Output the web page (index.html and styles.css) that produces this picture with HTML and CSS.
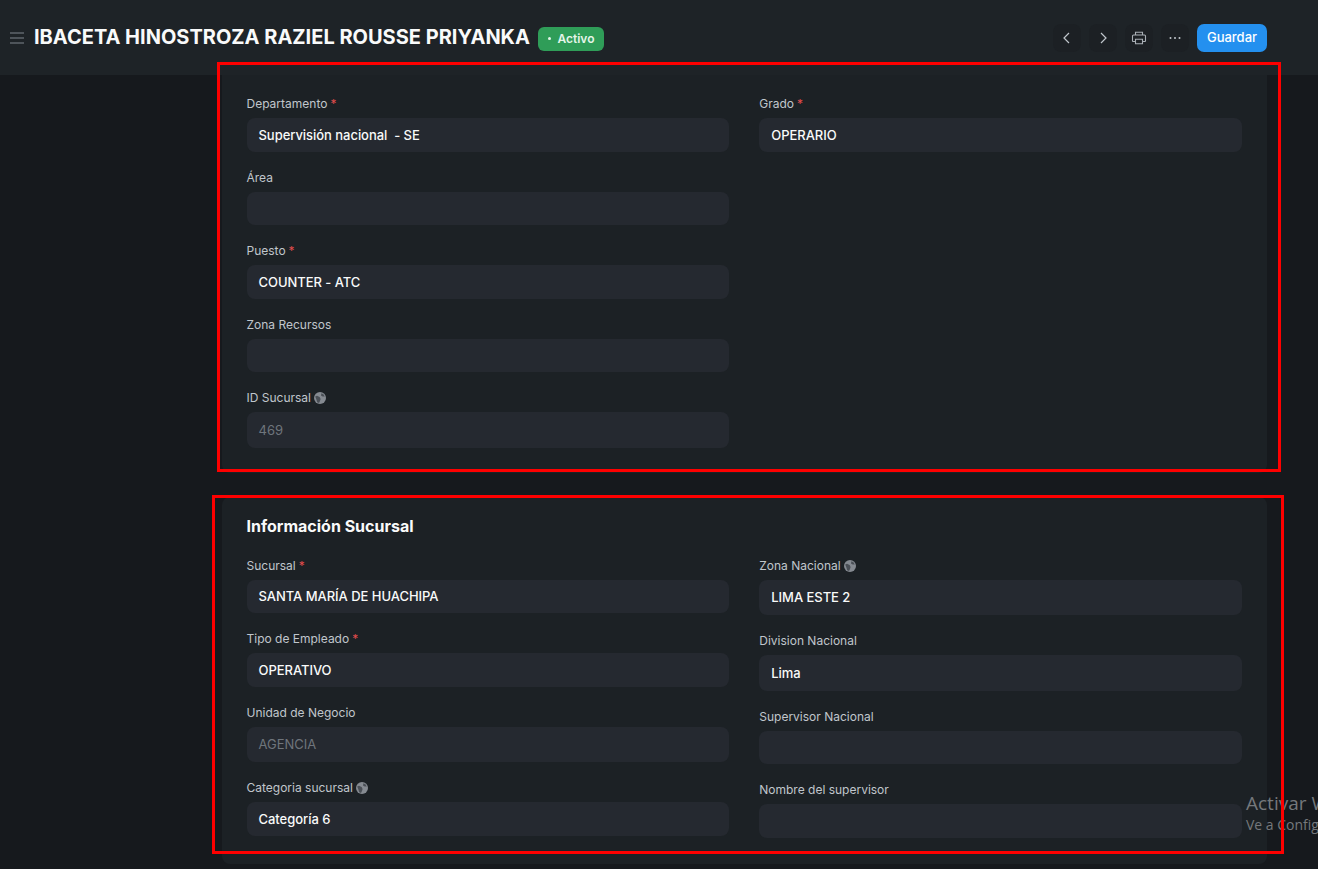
FILE: index.html
```html
<!DOCTYPE html>
<html lang="es">
<head>
<meta charset="utf-8">
<title>IBACETA HINOSTROZA RAZIEL ROUSSE PRIYANKA</title>
<link rel="stylesheet" href="styles.css">
</head>
<body>
<svg class="defs" width="0" height="0" aria-hidden="true">
  <symbol id="globe" viewBox="0 0 12 12">
    <circle cx="6" cy="6" r="6" fill="#858a91"/>
    <path d="M7.400 1.200 9.400 2.200 10.800 4.400 8.600 4.600 7 3.400ZM1.200 4.600 3 3.800 5.600 5 6.600 7 6 9 5 11 3.200 10.200 2.400 7.400Z" fill="#4a4f56"/>
  </symbol>
</svg>

<header class="topbar">
  <div class="title-group">
    <svg class="menu-icon" viewBox="0 0 16 14" width="16" height="14" aria-hidden="true"><path d="M1 2h14M1 7h14M1 12h14" stroke="#5f656c" stroke-width="1.5" fill="none"/></svg>
    <h1 class="title">IBACETA HINOSTROZA RAZIEL ROUSSE PRIYANKA</h1>
    <span class="badge"><span class="dot"></span>Activo</span>
  </div>
  <div class="actions">
    <button class="icon-btn" aria-label="Anterior"><svg viewBox="0 0 16 16" width="16" height="16"><path d="M10 3 5 8l5 5" stroke="#c0c6cc" stroke-width="1.2" fill="none"/></svg></button>
    <button class="icon-btn" aria-label="Siguiente"><svg viewBox="0 0 16 16" width="16" height="16"><path d="m6 3 5 5-5 5" stroke="#c0c6cc" stroke-width="1.2" fill="none"/></svg></button>
    <button class="icon-btn" aria-label="Imprimir"><svg viewBox="0 0 16 16" width="16" height="16"><path d="M4.500 5V2.200h7V5M4.500 11.500H2.200a.7.7 0 0 1-.7-.7V6a1 1 0 0 1 1-1h11a1 1 0 0 1 1 1v4.800a.7.7 0 0 1-.7.7h-2.300M4.500 9.300h7v4.500h-7z" stroke="#a9afb5" stroke-width="1.100" fill="none"/></svg></button>
    <button class="icon-btn" aria-label="Más"><svg viewBox="0 0 16 16" width="16" height="16"><g fill="#c0c6cc"><circle cx="3.500" cy="8" r="1"/><circle cx="8" cy="8" r="1"/><circle cx="12.500" cy="8" r="1"/></g></svg></button>
    <button class="save-btn">Guardar</button>
  </div>
</header>

<main class="content">
  <section class="card card-first">
    <div class="col">
      <div class="field"><label class="label">Departamento <span class="req">*</span></label><div class="input value">Supervisión nacional&nbsp; - SE</div></div>
      <div class="field"><label class="label">Área</label><div class="input"></div></div>
      <div class="field"><label class="label">Puesto <span class="req">*</span></label><div class="input value">COUNTER - ATC</div></div>
      <div class="field"><label class="label">Zona Recursos</label><div class="input"></div></div>
      <div class="field"><label class="label">ID Sucursal <svg class="globe"><use href="#globe"/></svg></label><div class="input readonly">469</div></div>
    </div>
    <div class="col">
      <div class="field"><label class="label">Grado <span class="req">*</span></label><div class="input value">OPERARIO</div></div>
    </div>
  </section>

  <section class="card card-second">
    <h2 class="section-title">Información Sucursal</h2>
    <div class="columns">
      <div class="col">
        <div class="field"><label class="label">Sucursal <span class="req">*</span></label><div class="input value">SANTA MARÍA DE HUACHIPA</div></div>
        <div class="field"><label class="label">Tipo de Empleado <span class="req">*</span></label><div class="input value">OPERATIVO</div></div>
        <div class="field"><label class="label">Unidad de Negocio</label><div class="input readonly">AGENCIA</div></div>
        <div class="field"><label class="label">Categoria sucursal <svg class="globe"><use href="#globe"/></svg></label><div class="input value">Categoría 6</div></div>
      </div>
      <div class="col">
        <div class="field"><label class="label">Zona Nacional <svg class="globe"><use href="#globe"/></svg></label><div class="input tall value">LIMA ESTE 2</div></div>
        <div class="field"><label class="label">Division Nacional</label><div class="input tall value">Lima</div></div>
        <div class="field"><label class="label">Supervisor Nacional</label><div class="input"></div></div>
        <div class="field"><label class="label">Nombre del supervisor</label><div class="input"></div></div>
      </div>
    </div>
  </section>
</main>

<div class="watermark">
  <div class="wm-title">Activar Windows</div>
  <div class="wm-sub">Ve a Configuración</div>
</div>
<div class="frame frame-one"></div>
<div class="frame frame-two"></div>
</body>
</html>
```
FILE: styles.css
```css
* { box-sizing: border-box; }

html, body {
  margin: 0;
  height: 869px;
  overflow: hidden;
}

body {
  background: #16191d;
  color: #f5f6f7;
  font-family: Inter, "Liberation Sans", sans-serif;
  font-size: 13px;
  position: relative;
}

.defs { position: absolute; }

.topbar {
  height: 75px;
  background: #1e2327;
  display: flex;
  align-items: center;
  justify-content: space-between;
  padding: 0 51px 0 9px;
}

.title-group {
  display: flex;
  align-items: center;
}

.menu-icon { margin-right: 9px; }

.title {
  margin: 0 0 2px;
  font-size: 20px;
  font-weight: 700;
  line-height: 28px;
  color: #f9fafa;
  white-space: nowrap;
}

.badge {
  margin-left: 8px;
  margin-top: 3px;
  height: 24px;
  padding: 0 10px 1px;
  display: inline-flex;
  align-items: center;
  gap: 6px;
  border-radius: 6px;
  background: #2f9d58;
  color: #e4f5e9;
  font-size: 12px;
  font-weight: 600;
}

.dot {
  width: 3.500px;
  height: 3.500px;
  border-radius: 50%;
  background: #e4f5e9;
}

.actions {
  display: flex;
  gap: 8px;
}

.icon-btn {
  width: 28px;
  height: 28px;
  padding: 0;
  display: flex;
  align-items: center;
  justify-content: center;
  border: 0;
  border-radius: 8px;
  background: #1c2024;
}

.save-btn {
  width: 70px;
  height: 28px;
  padding: 0 0 2px;
  border: 0;
  border-radius: 7px;
  background: #2490ef;
  color: #fff;
  font-family: inherit;
  font-size: 13px;
  font-weight: 500;
}

.content {
  width: 1045.500px;
  margin-left: 221.500px;
}

.card {
  background: #1c2125;
  padding: 0 25px;
}

.card-first {
  height: 398px;
  padding-top: 18.800px;
  border-radius: 0 0 8px 8px;
  display: grid;
  grid-template-columns: 1fr 1fr;
  column-gap: 30px;
  align-items: start;
}

.card-second {
  margin-top: 24px;
  height: 367px;
  padding-top: 19px;
  border-radius: 8px;
}

.section-title {
  margin: 0 0 18.400px;
  font-size: 16px;
  font-weight: 700;
  line-height: 21px;
  color: #f9fafa;
}

.columns {
  display: grid;
  grid-template-columns: 1fr 1fr;
  column-gap: 30px;
}

.col {
  display: flex;
  flex-direction: column;
}

.field { margin-bottom: 15.600px; }

.label {
  display: flex;
  align-items: center;
  gap: 3px;
  height: 24.400px;
  padding-bottom: 3.400px;
  font-size: 12px;
  line-height: 18px;
  color: #c0c6cc;
}

.req { color: #e24c4c; }

.globe {
  width: 12px;
  height: 12px;
}

.input {
  height: 33.500px;
  padding: 0 12px 0.600px;
  display: flex;
  align-items: center;
  border-radius: 8px;
  background: #252930;
  font-size: 13px;
  white-space: pre;
}

.value {
  font-weight: 500;
  letter-spacing: -0.040px;
  color: #f9fafa;
}

.readonly,
.tall { height: 35.400px; }

.readonly {
  color: #6f757c;
  font-weight: 400;
}

.watermark {
  position: absolute;
  left: 1246px;
  top: 790px;
  width: 300px;
  color: #75787c;
  font-family: "Open Sans", sans-serif;
  white-space: nowrap;
}

.wm-title {
  font-size: 19px;
  line-height: 26px;
}

.wm-sub {
  font-size: 14px;
  line-height: 18px;
}

.frame {
  position: absolute;
  border: 3px solid #fe0000;
  pointer-events: none;
}

.frame-one {
  left: 217px;
  top: 62px;
  width: 1064px;
  height: 410px;
}

.frame-two {
  left: 212px;
  top: 495px;
  width: 1072px;
  height: 359px;
}
```
